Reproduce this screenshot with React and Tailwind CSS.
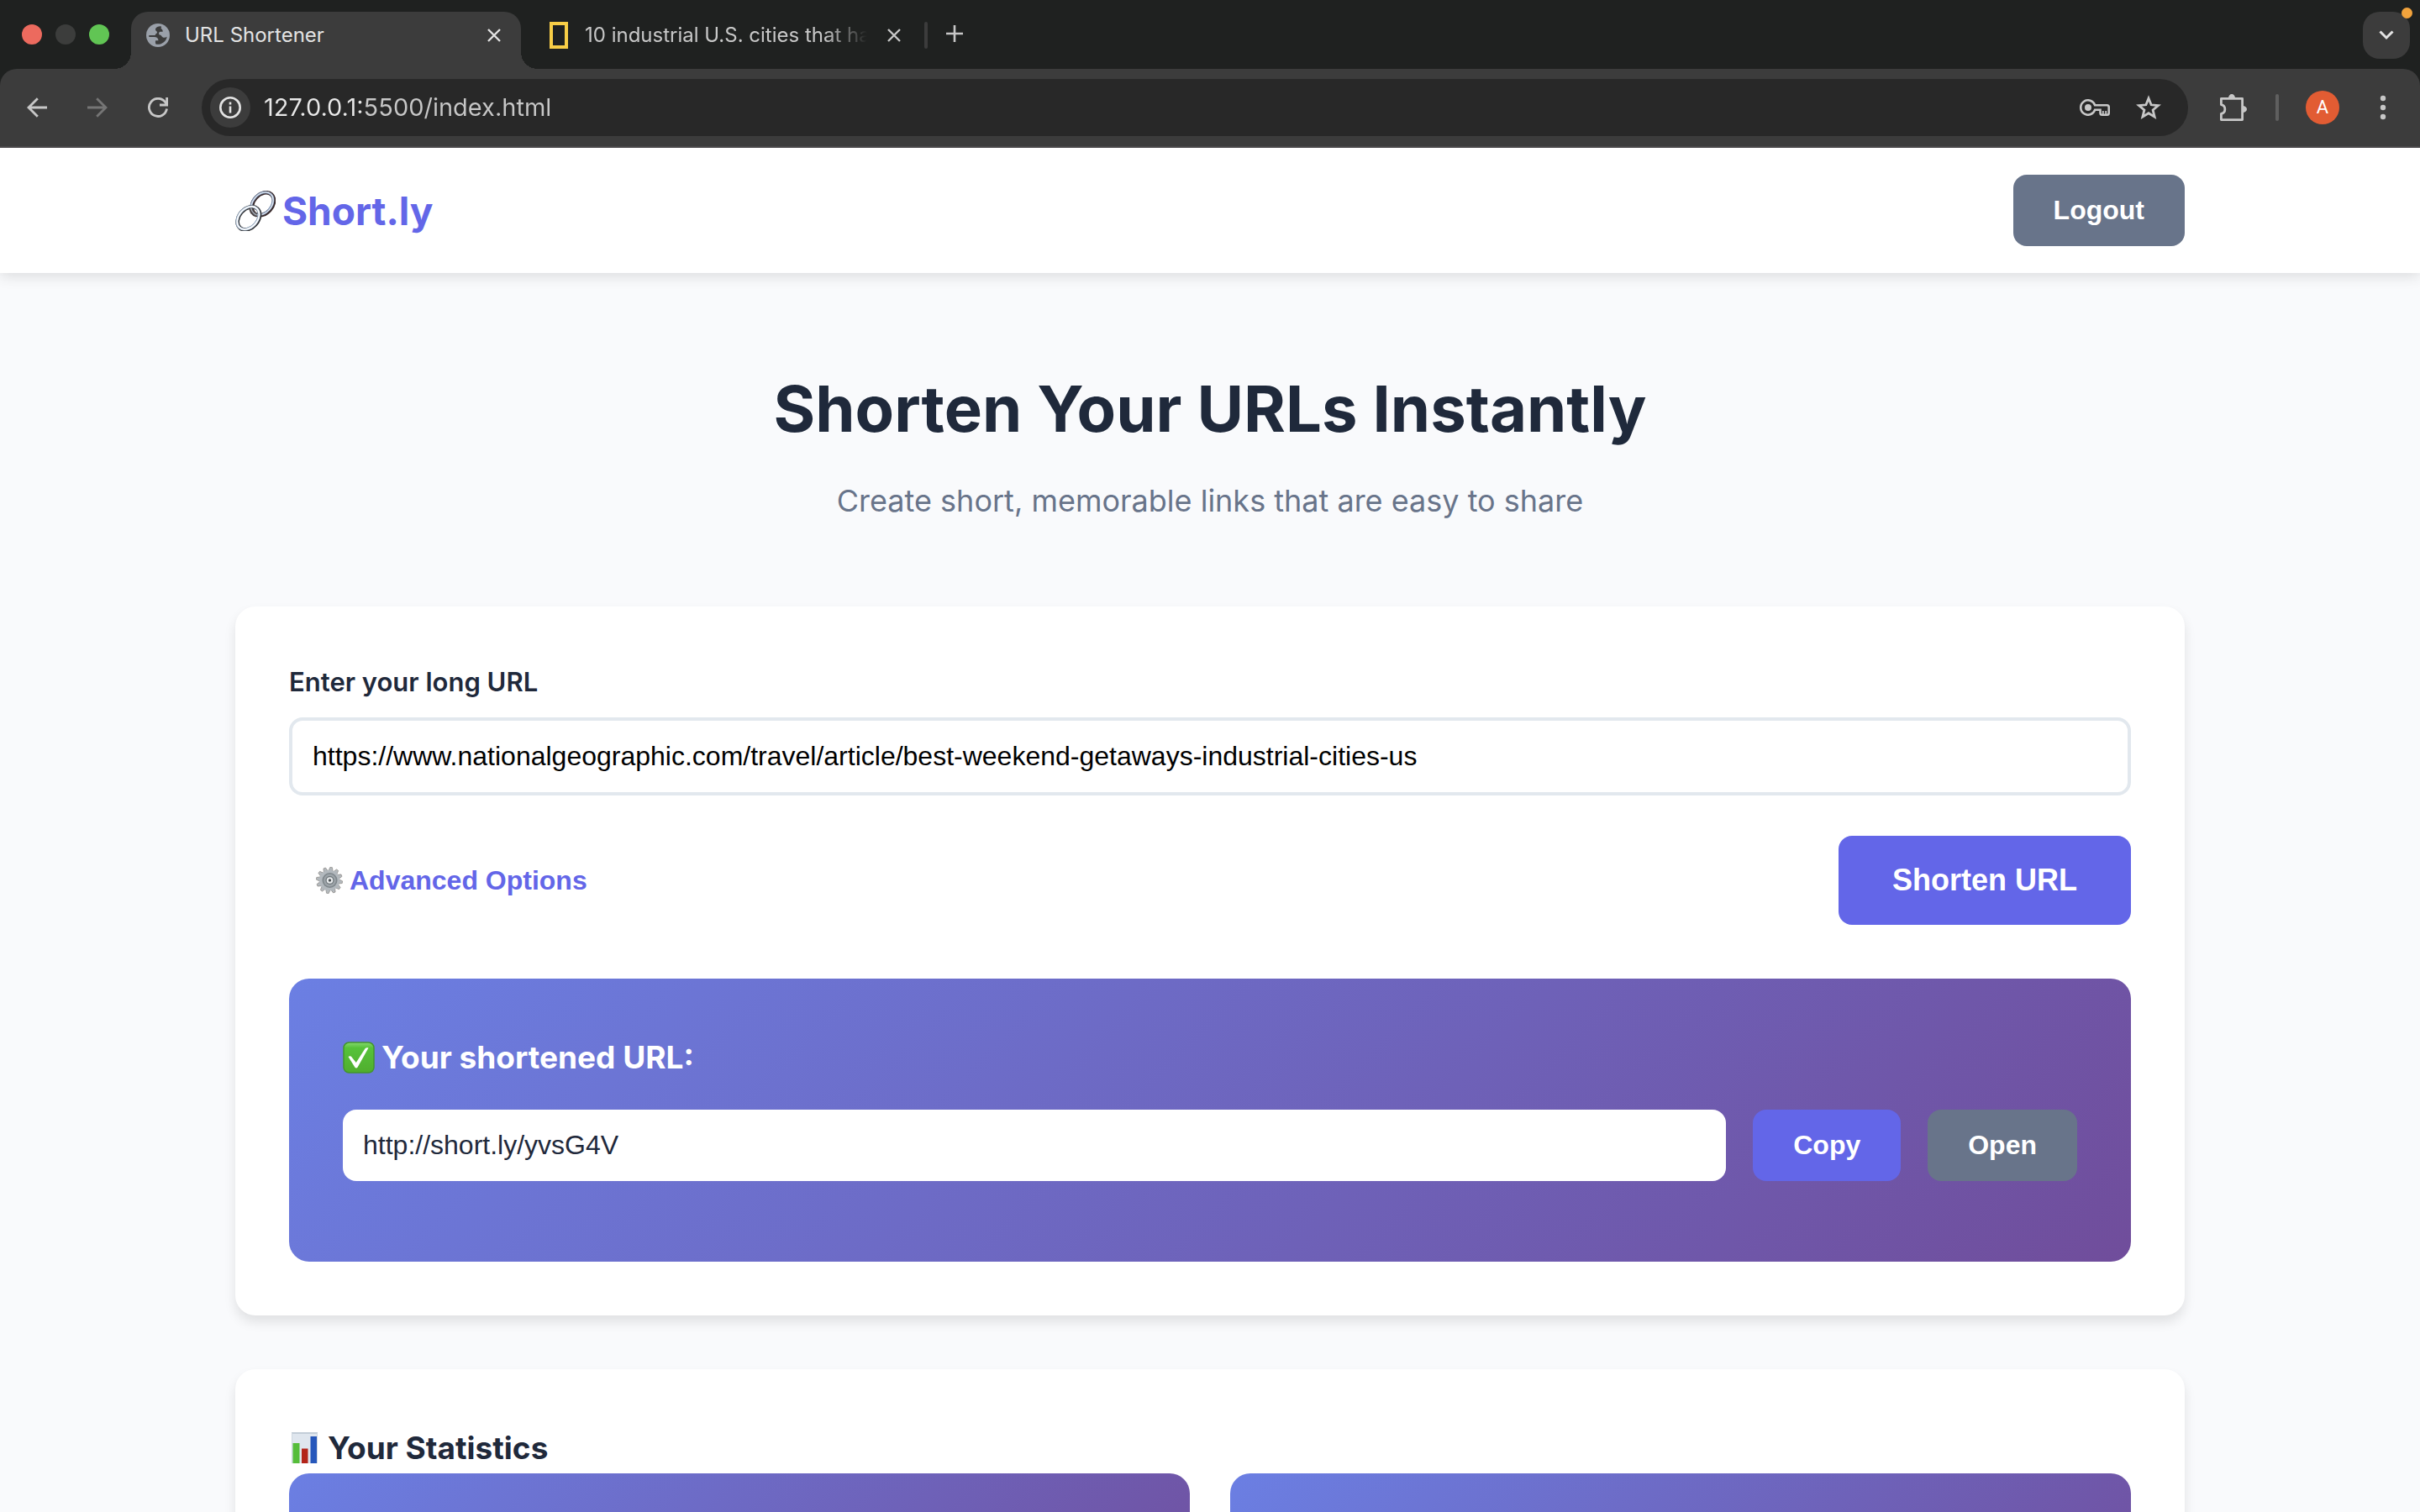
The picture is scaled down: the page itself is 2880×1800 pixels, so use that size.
import React from "react";

function CloseIcon() {
  return (
    <svg viewBox="0 0 16 16" className="size-4" fill="none" stroke="currentColor" strokeWidth="2.4">
      <path d="M1 1 15 15M15 1 1 15" />
    </svg>
  );
}

function GlobeIcon() {
  return (
    <svg viewBox="0 0 28 28" className="size-7 shrink-0">
      <circle cx="14" cy="14" r="14" fill="#9aa0a9" />
      <path
        d="M17.500 3.300c-3.300 0-6.500 1.200-6.500 3.900 0 1.800 2 1.700 2 3.300 0 1.900-2.300 1.500-2.300 3.400H3.300c-.2 1 0 1.600.1 2.200h6.200c2.800 0 4.900 1.500 4.900 4.200h-3.300c-.5 1.500-.2 2.800.2 4.200 6.200 1.300 12.300-2.600 13.300-8.800-1.600 1.200-3.600 1.500-5.200.6-1.400-.8-1.100-2.500-3.200-2.700-1-.1-1.300-.8-1.200-1.800.1-1.400 1-2 2.300-2h2.300c.1-2.300-1-3.200-2.200-3.700.6-1.200.6-2 0-2.800Z"
        fill="#3c3c3c"
      />
    </svg>
  );
}

function LinkEmoji() {
  return (
    <svg viewBox="0 0 48 48" className="size-12 shrink-0" fill="none">
      <g transform="rotate(-48 32.500 15.500)">
        <ellipse cx="32.500" cy="16" rx="15.200" ry="11.200" stroke="#3a2a2b" strokeWidth="4.600" />
        <ellipse cx="32.300" cy="15" rx="15.200" ry="11" stroke="#7f95b5" strokeWidth="2.800" />
        <ellipse cx="32.300" cy="15.200" rx="15.200" ry="11" stroke="#e8edf4" strokeWidth="1.200" />
      </g>
      <g transform="rotate(-48 15.500 32.500)">
        <ellipse cx="15.500" cy="33" rx="15.400" ry="11.200" stroke="#333335" strokeWidth="4.600" />
        <ellipse cx="15.300" cy="32.200" rx="15.300" ry="11" stroke="#9fb4cc" strokeWidth="3.200" />
        <ellipse cx="15.400" cy="32.400" rx="15.300" ry="11" stroke="#ffffff" strokeWidth="1.700" />
      </g>
      <path d="M18.500 20.500c.4 4 3 7.800 7 9" stroke="#4a4446" strokeWidth="4.400" />
      <path d="M18.700 20.500c.6 3.800 3 7 6.800 8.500" stroke="#a3abb5" strokeWidth="1.600" />
    </svg>
  );
}

const TEETH = [0, 30, 60, 90, 120, 150, 180, 210, 240, 270, 300, 330];

function GearEmoji() {
  return (
    <svg viewBox="0 0 32 32" className="size-8 shrink-0">
      {TEETH.map((a) => (
        <path key={a} d="M13.500 4.500 14.700.4h2.600l1.200 4.100z" fill="#b4b9bd" stroke="#84807c" strokeWidth=".6" transform={`rotate(${a + 8} 16 16)`} />
      ))}
      <circle cx="16" cy="16" r="12.300" fill="#b2b8bd" />
      <circle cx="16.500" cy="16" r="9" fill="#7e868b" />
      <circle cx="16.500" cy="16" r="7.400" fill="#9ca3a8" />
      <circle cx="16.500" cy="16" r="5" fill="#6d7579" />
      <circle cx="16.500" cy="16" r="3.800" fill="#e8ebed" />
      <circle cx="16.500" cy="16" r="1.700" fill="#4d5356" />
    </svg>
  );
}

function CheckEmoji() {
  return (
    <svg viewBox="0 0 38 38" className="size-[38px] shrink-0">
      <defs>
        <linearGradient id="check-fill" x1="0" y1="0" x2="0" y2="1">
          <stop offset="0" stopColor="#86d870" />
          <stop offset=".18" stopColor="#56c23a" />
          <stop offset="1" stopColor="#50ae2e" />
        </linearGradient>
      </defs>
      <rect x="1" y="1" width="36" height="36" rx="6.500" fill="url(#check-fill)" stroke="#43962c" strokeWidth="1.500" />
      <path d="M6.500 18c1.500-1.300 3.200-1.200 4.300.7l5 6.300L26.500 8.300c1-1.200 2.500-1.300 4-.8L17.600 30.500c-.8 1.300-2.500 1.300-3.300 0z" fill="#fff" />
    </svg>
  );
}

function ChartEmoji() {
  return (
    <svg viewBox="0 0 38 38" className="size-[38px] shrink-0">
      <rect x="3" y="0" width="31" height="37" fill="#dfe6ee" />
      <path d="M3 1h31" stroke="#c3cdd8" strokeWidth="2" />
      <path d="M3.500 1v36M33.500 1v36" stroke="#cfd8e1" />
      <rect x="4.500" y="13" width="8" height="24" fill="#55bd3a" />
      <rect x="15" y="19.500" width="7.500" height="17.500" fill="#b3241a" />
      <rect x="25.500" y="5" width="7.500" height="32" fill="#2657bb" />
    </svg>
  );
}

function TabStrip() {
  return (
    <div className="flex h-[82px] items-end bg-[#1f2120] pl-[26px] pr-3">
      <div className="flex h-full items-center gap-4">
        <button aria-label="Close window" className="size-6 rounded-full bg-[#ec6a5e]" />
        <button aria-label="Minimize window" className="size-6 rounded-full bg-[#3c3d3c]" />
        <button aria-label="Zoom window" className="size-6 rounded-full bg-[#61c554]" />
      </div>
      <div className="relative ml-[26px] flex h-[68px] w-[464px] items-center rounded-t-[20px] bg-[#3c3c3c] pb-3 pl-[18px] pr-6 text-[#e3e3e3]">
        <span className="absolute -left-5 bottom-0 size-5 bg-[radial-gradient(circle_at_0_0,transparent_20px,#3c3c3c_20px)]" />
        <span className="absolute -right-5 bottom-0 size-5 bg-[radial-gradient(circle_at_100%_0,transparent_20px,#3c3c3c_20px)]" />
        <GlobeIcon />
        <span className="ml-[18px] flex-1 text-2xl leading-8">URL Shortener</span>
        <button aria-label="Close tab">
          <CloseIcon />
        </button>
      </div>
      <div className="ml-[34px] flex h-[68px] items-center pb-3 text-[#c7c7c7]">
        <span className="h-8 w-[22px] border-4 border-[#f8ce46]" />
        <span className="ml-5 w-[336px] overflow-hidden whitespace-nowrap text-2xl leading-8 [mask-image:linear-gradient(90deg,#000_85%,transparent)]">
          10 industrial U.S. cities that ha
        </span>
        <button aria-label="Close tab" className="ml-6">
          <CloseIcon />
        </button>
        <span className="ml-7 h-8 w-1 rounded-full bg-[#3c3c3c]" />
        <button aria-label="New tab" className="ml-[22px] pb-1">
          <svg viewBox="0 0 20 20" className="size-5" fill="none" stroke="currentColor" strokeWidth="2.600">
            <path d="M10 0v20M0 10h20" />
          </svg>
        </button>
      </div>
      <div className="relative mb-3 ml-auto">
        <button aria-label="Search tabs" className="flex size-14 items-center justify-center rounded-[20px] bg-[#3c3c3c] text-[#e3e3e3]">
          <svg viewBox="0 0 18 12" className="h-3 w-[18px]" fill="none" stroke="currentColor" strokeWidth="3">
            <path d="M1.500 1.500 9 9l7.500-7.500" />
          </svg>
        </button>
        <span className="absolute -right-[3px] -top-[5px] size-[13px] rounded-full bg-[#f2a33c]" />
      </div>
    </div>
  );
}

function Toolbar() {
  return (
    <div className="bg-[#1f2120]">
      <div className="flex h-[94px] items-center rounded-t-[20px] border-b-2 border-[#4a484a] bg-[#3c3c3c] pl-8 pr-10 text-[#c7c7c7]">
        <button aria-label="Back">
          <svg viewBox="0 0 24 24" className="size-6" fill="none" stroke="currentColor" strokeWidth="2.800">
            <path d="M24 12H2M12.800 1.200 2 12l10.800 10.800" />
          </svg>
        </button>
        <button aria-label="Forward" className="ml-12 text-[#757575]">
          <svg viewBox="0 0 24 24" className="size-6" fill="none" stroke="currentColor" strokeWidth="2.800">
            <path d="M0 12h22M11.200 1.200 22 12 11.200 22.800" />
          </svg>
        </button>
        <button aria-label="Reload" className="ml-12">
          <svg viewBox="0 0 24 24" className="size-6" fill="none" stroke="currentColor" strokeWidth="2.800">
            <path d="M22.500 13.500A10.600 10.600 0 1 1 20.500 5.500L22.500 8.500" />
            <path d="M22.600 0v9H14" />
          </svg>
        </button>
        <div className="ml-10 flex h-[68px] flex-1 items-center rounded-full bg-[#282828] pl-[10px] pr-8">
          <button aria-label="View site information" className="flex size-12 items-center justify-center rounded-full bg-[#3c3c3c] text-[#e3e3e3]">
            <svg viewBox="0 0 26 26" className="size-[26px]" fill="none" stroke="currentColor" strokeWidth="2.600">
              <circle cx="13" cy="13" r="11.700" />
              <path d="M13 11.500v8M13 6.500v3" />
            </svg>
          </button>
          <input
            aria-label="Address bar"
            defaultValue="127.0.0.1:5500/index.html"
            className="ml-4 min-w-0 flex-1 bg-[linear-gradient(90deg,#e8e8e8_118px,#c7c7c7_118px)] bg-clip-text text-[29px] leading-10 text-transparent outline-none"
          />
          <button aria-label="Passwords">
            <svg viewBox="0 0 36 20" className="h-5 w-9" fill="none" stroke="currentColor" strokeWidth="2.600">
              <path d="M18.200 7.300A8.700 8.700 0 1 0 18.200 12.700H24.500V16.500Q24.500 18.700 26.700 18.700H32.500Q34.700 18.700 34.700 16.500V9.500Q34.700 7.300 32.500 7.300Z" />
              <circle cx="10" cy="10" r="4" fill="currentColor" stroke="none" />
              <path d="M27.800 18v-4M31.200 18v-4" strokeWidth="1.800" />
            </svg>
          </button>
          <button aria-label="Bookmark this tab" className="ml-[31px]">
            <svg viewBox="0 0 30 30" className="size-[30px]" fill="none" stroke="currentColor" strokeWidth="2.800">
              <path d="m15 4 3.100 7.800 8.400.7-6.400 5.400 2 8.200L15 21.700l-7.100 4.400 2-8.200-6.400-5.400 8.400-.7z" />
            </svg>
          </button>
        </div>
        <button aria-label="Extensions" className="ml-[38px]">
          <svg viewBox="0 0 32 32" className="size-8" fill="none" stroke="currentColor" strokeWidth="2.800" strokeLinejoin="round">
            <path d="M1.400 5.400H26.600V30.600H1.400V23.400A5.500 5.500 0 0 0 1.400 12.600Z" />
            <path d="M10 5a4 5 0 0 1 8 0ZM27 14a5 4 0 0 1 0 8Z" fill="currentColor" stroke="none" />
          </svg>
        </button>
        <span className="ml-[34px] h-8 w-1 rounded-full bg-[#5f5f5f]" />
        <button aria-label="Profile" className="ml-8 flex size-10 items-center justify-center rounded-full bg-[#e25c33] font-[Roboto,sans-serif] text-[22px] leading-10 text-white">
          A
        </button>
        <button aria-label="Menu" className="ml-12">
          <svg viewBox="0 0 8 28" className="h-7 w-2 overflow-visible" fill="currentColor">
            <circle cx="4" cy="3" r="3.200" />
            <circle cx="4" cy="14" r="3.200" />
            <circle cx="4" cy="25" r="3.200" />
          </svg>
        </button>
      </div>
    </div>
  );
}

const buttonBase =
  "rounded-2xl font-['Liberation_Sans',Arial,sans-serif] font-bold text-white";

const shadow = "shadow-[0_8px_14px_rgba(0,0,0,0.1)]";

function SiteHeader() {
  return (
    <header className="relative bg-white px-[280px] py-8 shadow-[0_4px_16px_rgba(0,0,0,0.12)]">
      <div className="mx-auto flex max-w-[2320px] items-center justify-between">
        <a href="#" className="flex items-center gap-2 text-[46px] font-bold leading-[60px] text-[#6366e8]">
          <LinkEmoji />
          Short.ly
        </a>
        <button className={`${buttonBase} bg-[#68748a] px-12 py-6 text-[32px] leading-[37px]`}>Logout</button>
      </div>
    </header>
  );
}

function ShortenCard() {
  return (
    <section className={`rounded-3xl bg-white p-16 ${shadow}`}>
      <label htmlFor="long-url" className="mb-4 block text-[31px] font-semibold leading-[52px]">
        Enter your long URL
      </label>
      <input
        id="long-url"
        type="url"
        defaultValue="https://www.nationalgeographic.com/travel/article/best-weekend-getaways-industrial-cities-us"
        className="block w-full rounded-2xl border-4 border-[#e2e8ee] bg-white px-6 py-6 font-['Liberation_Sans',Arial,sans-serif] text-[32px] leading-[37px] text-black outline-none"
      />
      <div className="mt-12 flex items-center justify-between">
        <button className="flex items-center gap-2 px-8 py-6 font-['Liberation_Sans',Arial,sans-serif] text-[32px] font-bold leading-[37px] text-[#6366e8]">
          <GearEmoji />
          Advanced Options
        </button>
        <button className={`${buttonBase} bg-[#6366e8] px-16 py-8 text-[36px] leading-[42px]`}>Shorten URL</button>
      </div>
      <div className="mt-16 rounded-3xl bg-[linear-gradient(135deg,#6b7fe3,#704d9b)] px-16 pb-24 pt-16">
        <h2 className="mb-8 flex items-center gap-2 text-[37px] font-bold leading-[60px] text-white">
          <CheckEmoji />
          <span id="short-url-label">Your shortened URL:</span>
        </h2>
        <div className="flex gap-8">
          <input
            aria-labelledby="short-url-label"
            readOnly
            value="http://short.ly/yvsG4V"
            className="min-w-0 flex-1 rounded-2xl bg-white px-6 py-6 font-['Liberation_Sans',Arial,sans-serif] text-[32px] leading-[37px] text-[#1f293b] outline-none"
          />
          <button className={`${buttonBase} bg-[#6366e8] px-12 py-6 text-[32px] leading-[37px]`}>Copy</button>
          <button className={`${buttonBase} bg-[#68748a] px-12 py-6 text-[32px] leading-[37px]`}>Open</button>
        </div>
      </div>
    </section>
  );
}

function StatisticsCard() {
  return (
    <section className={`mt-16 rounded-3xl bg-white p-16 ${shadow}`}>
      <h2 className="flex items-center gap-2 text-[37px] font-bold leading-[60px]">
        <ChartEmoji />
        Your Statistics
      </h2>
      <div className="grid grid-cols-2 gap-12">
        <div className="h-60 rounded-3xl bg-[linear-gradient(135deg,#6b7fe3,#704d9b)]" />
        <div className="h-60 rounded-3xl bg-[linear-gradient(135deg,#6b7fe3,#704d9b)]" />
      </div>
    </section>
  );
}

export default function App() {
  return (
    <div className="flex h-screen flex-col overflow-hidden bg-[#f9fafc] font-[Inter,sans-serif] text-[#1f293b]">
      <TabStrip />
      <Toolbar />
      <div className="min-h-0 flex-1 overflow-hidden">
        <SiteHeader />
        <main className="px-[280px] pt-[113px]">
          <div className="mx-auto max-w-[2320px]">
            <div className="mb-24 text-center">
              <h1 className="text-[76px] font-bold leading-[96px]">Shorten Your URLs Instantly</h1>
              <p className="mt-8 text-[36px] leading-[60px] text-[#68748a]">
                Create short, memorable links that are easy to share
              </p>
            </div>
            <ShortenCard />
            <StatisticsCard />
          </div>
        </main>
      </div>
    </div>
  );
}
